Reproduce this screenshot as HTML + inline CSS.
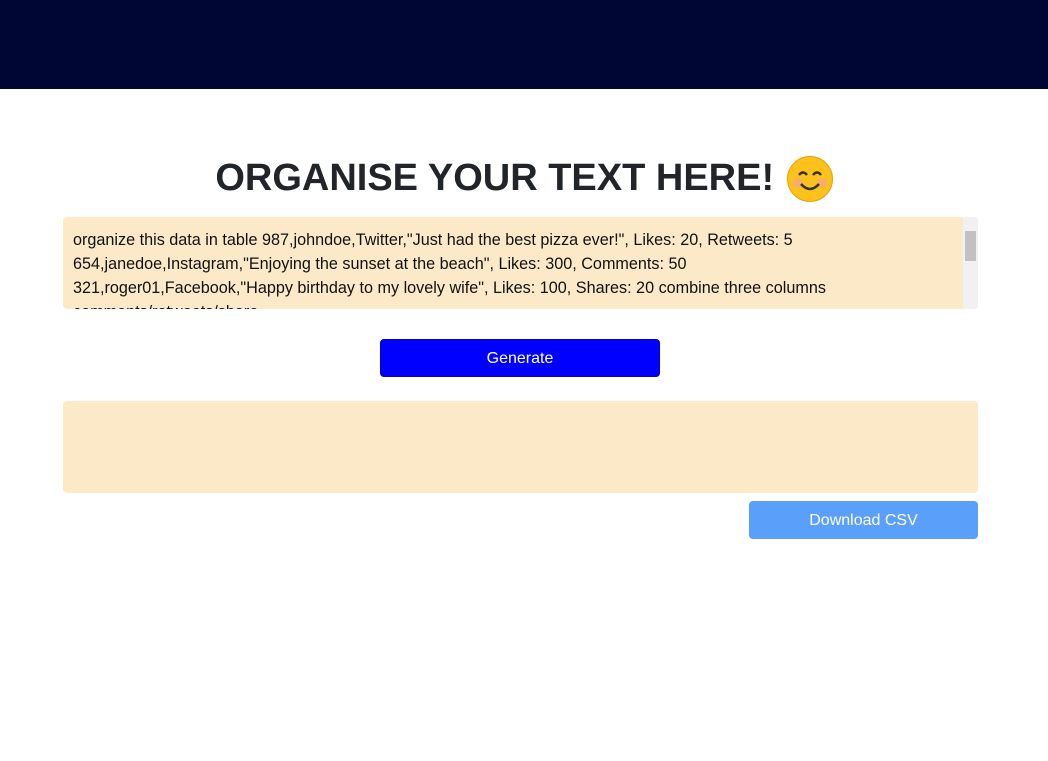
<!DOCTYPE html>
<html><head><style>
html,body{margin:0;padding:0;background:#fff;width:1048px;height:761px;overflow:hidden;font-family:"Liberation Sans",sans-serif;}
.top{height:89px;background:#000633;}
h1{position:absolute;left:0;width:1048px;top:151px;margin:0;text-align:center;font-size:38px;font-weight:900;color:#212529;line-height:54px;}
.emoji{display:inline-block;width:46px;height:46px;border-radius:50%;background:#fcc21b;vertical-align:-12px;position:relative;border:1px solid #e8a20a;box-sizing:border-box;margin-left:2px;}
.ta{position:absolute;left:63px;top:217px;width:915px;height:92px;background:#fce9c7;border-radius:4px;overflow:hidden;}
.ta .txt{position:absolute;left:10px;top:11px;font-size:16.2px;line-height:24px;color:#111;white-space:nowrap;}
.sb{position:absolute;right:0;top:0;width:15px;height:92px;background:#f1f1f1;}
.sb .th{position:absolute;left:2px;top:14px;width:11px;height:30px;background:#c1c1c1;}
.btn{position:absolute;left:380px;top:339px;width:280px;height:38px;background:#0000ff;border-radius:4px;color:#fff;text-align:center;line-height:38px;font-size:16px;box-sizing:border-box;border:1px solid #0000cc;}
.out{position:absolute;left:63px;top:401px;width:915px;height:92px;background:#fce9c7;border-radius:4px;}
.dl{position:absolute;left:749px;top:501px;width:229px;height:38px;background:#5aa0fb;border-radius:4px;color:#fff;text-align:center;line-height:40px;font-size:16px;}
</style></head><body>
<div class="top"></div>
<h1>ORGANISE YOUR TEXT HERE! <span class="emoji"><svg width="44" height="44" viewBox="0 0 44 44" style="position:absolute;left:0;top:0"><circle cx="10" cy="26" r="5" fill="#f5a0a0" opacity=".6"/><circle cx="34" cy="26" r="5" fill="#f5a0a0" opacity=".6"/><path d="M11 18 q4-5 8 0 M25 18 q4-5 8 0" stroke="#333" stroke-width="2.5" fill="none"/><path d="M13 27 q9 10 18 0" stroke="#333" stroke-width="2.5" fill="none"/></svg></span></h1>
<div class="ta"><div class="txt">organize this data in table 987,johndoe,Twitter,"Just had the best pizza ever!", Likes: 20, Retweets: 5<br>654,janedoe,Instagram,"Enjoying the sunset at the beach", Likes: 300, Comments: 50<br>321,roger01,Facebook,"Happy birthday to my lovely wife", Likes: 100, Shares: 20 combine three columns<br>comments/retweets/share</div><div class="sb"><div class="th"></div></div></div>
<div class="btn">Generate</div>
<div class="out"></div>
<div class="dl">Download CSV</div>
</body></html>
